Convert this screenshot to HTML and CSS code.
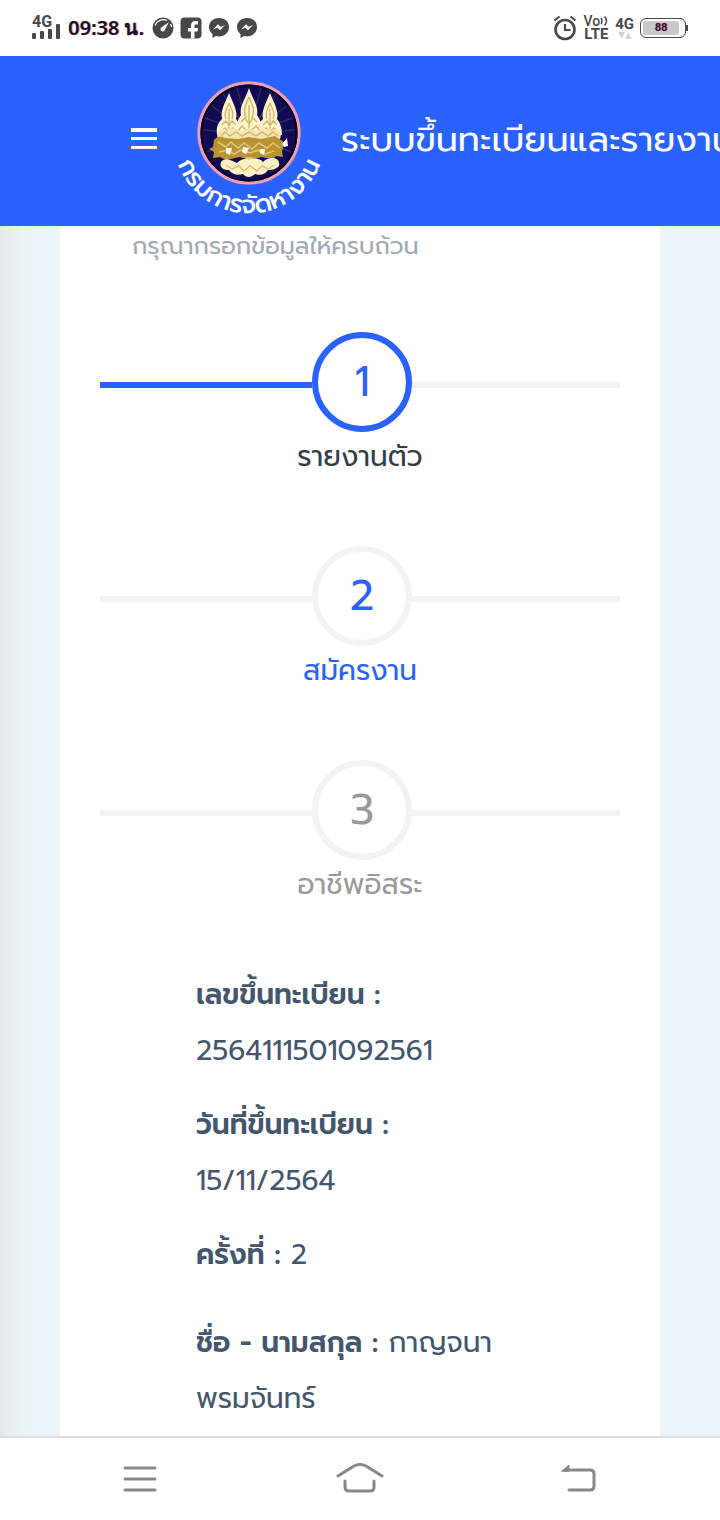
FILE: index.html
```html
<!DOCTYPE html>
<html lang="th">
<head>
    <meta charset="UTF-8">
    <meta name="viewport" content="width=device-width, initial-scale=1.0">
    <title>ระบบขึ้นทะเบียนและรายงานตัว</title>
    <link rel="stylesheet" href="styles.css">
</head>
<body>
<div class="status-bar">
    <div class="status-left">
        <div class="signal">
            <span class="signal-label">4G</span>
            <svg width="28" height="16" viewBox="0 0 28 16" fill="#484848">
                <rect x="0" y="9" width="4" height="6" rx="1"/>
                <rect x="8" y="7" width="4" height="8" rx="1"/>
                <rect x="16" y="5" width="4" height="10" rx="1"/>
                <rect x="24" y="0" width="4" height="15" rx="1"/>
            </svg>
        </div>
        <span class="clock">09:38 น.</span>
        <div class="notices">
            <svg width="22" height="22" viewBox="0 0 22 22">
                <circle cx="11" cy="11" r="10.5" fill="#484848"/>
                <path d="M3 8.500a9 9 0 0 1 12-5M18.500 7a9 9 0 0 1 1 3" fill="none" stroke="#fff" stroke-width="1.300"/>
                <path d="M17 5l-4 7.500a2.300 2.300 0 1 1-3-2.500z" fill="#fff"/>
            </svg>
            <svg width="22" height="22" viewBox="0 0 22 22">
                <rect x="0.500" y="0.500" width="21" height="21" rx="4" fill="#484848"/>
                <path d="M11 21.500v-7H8v-3.500h3V8.500C11 5.500 12.500 4 15.500 4H18v3.500h-2c-1 0-1.500.5-1.500 1.500v2H18l-.5 3.500h-3v7z" fill="#fff"/>
            </svg>
            <svg width="22" height="22" viewBox="0 0 22 22">
                <path d="M11 1C5 1 1 5 1 10c0 3 1.300 5.300 3.500 7v4l3.500-2c1 .3 2 .4 3 .4 6 0 10-4.200 10-9.400S17 1 11 1z" fill="#484848"/>
                <path d="M5 12.500l5-5.200 2.800 2.500L17 8l-5 5.200-2.700-2.500z" fill="#fff"/>
            </svg>
            <svg width="22" height="22" viewBox="0 0 22 22">
                <path d="M11 1C5 1 1 5 1 10c0 3 1.300 5.300 3.500 7v4l3.500-2c1 .3 2 .4 3 .4 6 0 10-4.200 10-9.400S17 1 11 1z" fill="#484848"/>
                <path d="M5 12.500l5-5.200 2.800 2.500L17 8l-5 5.200-2.700-2.500z" fill="#fff"/>
            </svg>
        </div>
    </div>
    <div class="status-right">
        <svg width="24" height="26" viewBox="0 0 24 26" fill="none" stroke="#484848">
            <circle cx="12" cy="14.500" r="9.500" stroke-width="2.600"/>
            <path d="M1.500 5.500l5-4M22.500 5.500l-5-4M12 9v6h5.500" stroke-width="2.200"/>
        </svg>
        <div class="volte">
            <span class="vo">Vo<svg width="9" height="12" viewBox="0 0 9 12" fill="none" stroke="#484848" stroke-width="1.500"><path d="M1 3q2 3 0 6M4.500 1.500q4 4.500 0 9"/></svg></span>
            <span class="lte">LTE</span>
        </div>
        <div class="data">
            <span class="data-label">4G</span>
            <svg width="14" height="8" viewBox="0 0 14 8" fill="#d4d4d4"><path d="M0 0h7L3.500 7zM7 7h7L10.500 0z"/></svg>
        </div>
        <div class="battery"><span class="battery-level">88</span></div>
    </div>
</div>

<header class="header">
    <button class="menu-button" aria-label="เมนู">
        <svg width="26" height="22" viewBox="0 0 26 22" fill="#fff"><path d="M0 0h26v4H0zM0 9h26v3H0zM0 18h26v3H0z"/></svg>
    </button>
    <a class="logo" href="#" aria-label="กรมการจัดหางาน">
        <svg width="160" height="150" viewBox="0 0 160 150">
            <defs>
                <path id="ring" d="M6 50A76 76 0 1 0 154 50"/>
                <g id="flame">
                    <path d="M0-24C4-14 9-6 7 2c3 4 5 8 5 16H-12c-1-8 1-12 5-16-2-8 3-16 7-26z" fill="#fff3cf"/>
                    <path d="M0-14c3 7 5 10 3 16M0-14c-3 7-5 10-3 16M0-8v20M-7 8l4-4 3 5 3-5 4 4M-8 14l4-3 4 4 4-4 4 3" fill="none" stroke="#d5b868" stroke-width="1.400"/>
                </g>
            </defs>
            <circle cx="80" cy="63" r="52" fill="#6a70b8"/>
            <circle cx="80" cy="63" r="50" fill="#120a52" stroke="#ef9dbb" stroke-width="3"/>
            <circle cx="80" cy="63" r="47.500" fill="none" stroke="#05031f" stroke-width="2"/>
            <path d="M80 63L36 48M80 63L34 60M80 63L43 36M80 63L54 24M80 63L68 18M80 63L92 18M80 63L107 24M80 63L118 36M80 63L124 48M80 63L126 60M80 63L38 82M80 63L122 82" stroke="#322763" stroke-width="1.500"/>
            <use href="#flame" x="60" y="47"/>
            <use href="#flame" x="101" y="47"/>
            <path d="M80 18c3 10 10 18 8 27 4 6 8 15 8 25H64c0-10 4-19 8-25-2-9 5-17 8-27z" fill="#fff3cf"/>
            <path d="M80 27c4 9 6 14 3 21M80 27c-4 9-6 14-3 21M80 35v28M72 52l4-4 4 6 4-6 4 4M68 62l5-6 7 7 7-7 5 6" fill="none" stroke="#d5b868" stroke-width="1.500"/>
            <path d="M49 69c-3-8 3-13 9-8l7-3 8 4 7-4 8 4 7-4 7 3c6-5 12 0 9 8z" fill="#f6e6b5"/>
            <path d="M52 66l4-4 5 4 6-4 6 4 7-4 7 4 6-4 6 4 5-4 5 4" fill="none" stroke="#d5b868" stroke-width="1.500"/>
            <path d="M45 70q5-6 11-2l13 1 11-2 12 2 14-3 9 6-2 10 1 5-7-1-3 3-12-2-11 3-10-3-14 3-6-3-7 1 1-6-5-3 4-2z" fill="#b89331"/>
            <path d="M49 72l8 5 5-5 7 6 6-5 8 6 7-6 8 5 6-5 7 5M50 82l9-2 6 4 7-4 9 3 8-3 7 4 9-3" fill="none" stroke="#e2c777" stroke-width="1.500"/>
            <path d="M57 78h6l-2 7-4-2zM74 77l6 1-3 6-4-2zM91 79h5l-1 6-4-2zM113 74l5-6 1 8-4 1z" fill="#fff"/>
            <path d="M77 87h6l3 8H74z" fill="#e2c777"/>
            <path d="M52 92c4-6 12-1 16 1 4-4 8-5 12-3 5-3 12-1 14 2 5-6 16-5 16 1 2 5-7 7-11 7-4 6-10 5-13 4-4 4-9 4-12 0-6 2-11 0-14-4-6 0-10-3-8-8z" fill="#fff0c5"/>
            <path d="M57 95l6 4 7-3 5 5 6-5 7 5 5-5 6 3 6-4" fill="none" stroke="#dcc176" stroke-width="1.500"/>
            <text class="ring-text"><textPath href="#ring" startOffset="50%" text-anchor="middle">กรมการจัดหางาน</textPath></text>
        </svg>
    </a>
    <h1 class="title">ระบบขึ้นทะเบียนและรายงานตัว</h1>
</header>

<main class="page">
    <section class="card">
        <p class="hint">กรุณากรอกข้อมูลให้ครบถ้วน</p>
        <nav class="steps">
            <a class="step active" href="#report">
                <span class="track"><span class="number">1</span></span>
                <span class="step-label">รายงานตัว</span>
            </a>
            <a class="step" href="#apply">
                <span class="track"><span class="number">2</span></span>
                <span class="step-label">สมัครงาน</span>
            </a>
            <a class="step disabled" href="#freelance">
                <span class="track"><span class="number">3</span></span>
                <span class="step-label">อาชีพอิสระ</span>
            </a>
        </nav>
        <div class="details">
            <p class="stacked"><strong>เลขขึ้นทะเบียน :</strong> <span>2564111501092561</span></p>
            <p class="stacked"><strong>วันที่ขึ้นทะเบียน :</strong> <span>15/11/2564</span></p>
            <p><strong>ครั้งที่ :</strong> 2</p>
            <p class="person"><strong>ชื่อ - นามสกุล :</strong> กาญจนา พรมจันทร์</p>
        </div>
    </section>
</main>

<footer class="system-nav">
    <button aria-label="แอปล่าสุด">
        <svg width="48" height="32" viewBox="0 0 48 32"><path d="M9 5h30M9 16h30M9 27h30"/></svg>
    </button>
    <button aria-label="หน้าหลัก">
        <svg width="48" height="32" viewBox="0 0 48 32"><path d="M2 13L18 3q6-3 12 0l16 10M9 18v6q0 4 4 4h21q4 0 4-4v-6"/></svg>
    </button>
    <button aria-label="ย้อนกลับ">
        <svg width="48" height="32" viewBox="0 0 48 32"><path d="M10 7h24q4 0 4 4v12q0 4-4 4H13"/><path class="arrow-head" d="M6 8l7-6v6z"/></svg>
    </button>
</footer>
</body>
</html>
```
FILE: styles.css
```css
* {
    box-sizing: border-box;
}
body {
    font-family: Prompt, "Noto Sans Thai", "Noto Sans", sans-serif;
    margin: 0;
    min-height: 100vh;
    display: flex;
    flex-direction: column;
    background-color: #fff;
    color: #44566c;
}
svg {
    display: block;
    flex-shrink: 0;
}
button {
    padding: 0;
    background: none;
    border: none;
    cursor: pointer;
}
a {
    text-decoration: none;
}

/* phone status bar */
.status-bar {
    height: 56px;
    padding: 0 34px 0 32px;
    display: flex;
    align-items: center;
    justify-content: space-between;
    color: #484848;
    font-family: Roboto, sans-serif;
    font-weight: bold;
}
.status-left {
    display: flex;
    align-items: center;
    gap: 8px;
}
.status-right {
    display: flex;
    align-items: center;
    gap: 6px;
}
.signal {
    position: relative;
    padding-top: 8px;
}
.signal-label {
    position: absolute;
    top: -2px;
    left: 0;
    font-size: 16px;
    line-height: 16px;
}
.clock {
    color: #171217;
    font-family: "Noto Sans", sans-serif;
    font-size: 20px;
    font-weight: 600;
    text-shadow: 1px 0 #e07aa8;
    white-space: nowrap;
}
.notices {
    display: flex;
    gap: 6px;
}
.volte, .data {
    display: flex;
    flex-direction: column;
    align-items: center;
    font-size: 15px;
    line-height: 14px;
}
.vo {
    display: flex;
    font-size: 14px;
    font-weight: 500;
    line-height: 12px;
}
.data {
    line-height: 16px;
}
.battery {
    position: relative;
    width: 46px;
    height: 20px;
    padding: 2px;
    border: 1px solid #484848;
    border-radius: 6px;
}
.battery::after {
    content: "";
    position: absolute;
    top: 6px;
    right: -3px;
    width: 2px;
    height: 6px;
    background-color: #484848;
}
.battery-level {
    display: block;
    width: 36px;
    background-color: #c9c9c9;
    border-radius: 3px;
    color: #2b1420;
    font-size: 11px;
    line-height: 14px;
    text-align: center;
    text-shadow: 1px 0 #e07aa8;
}

/* site header */
.header {
    height: 170px;
    padding: 0 0 4px 131px;
    display: flex;
    align-items: center;
    overflow: hidden;
    background-color: #2962ff;
    color: #fff;
}
.logo {
    margin: 12px 12px 0;
}
.ring-text {
    fill: #fff;
    font-size: 25px;
    font-weight: 500;
}
.title {
    margin: 0;
    font-size: 35px;
    font-weight: 400;
    white-space: nowrap;
}

/* page content */
.page {
    flex: 1;
    display: flex;
    padding: 0 60px;
    background: linear-gradient(to right, #e4e8ec, #eaf2f6 20px, #ebf4f8 40px);
}
.card {
    flex: 1;
    padding: 0 40px;
    background-color: #fff;
}
.hint {
    margin: 0;
    padding: 0 32px;
    color: #a1aab2;
    font-size: 24px;
    line-height: 40px;
}
.steps {
    display: flex;
    flex-direction: column;
    gap: 64px;
    padding: 66px 0 57px;
}
.step {
    color: #2962ff;
    text-align: center;
}
.track {
    display: flex;
    align-items: center;
}
.track::before, .track::after {
    content: "";
    flex: 1;
    height: 6px;
    margin-top: 6px;
    background-color: #f3f3f3;
}
.track::before {
    flex-basis: 4px;
}
.number {
    width: 100px;
    height: 100px;
    border: 6px solid #f3f3f3;
    border-radius: 50%;
    font-size: 42px;
    line-height: 88px;
}
.step-label {
    display: block;
    font-size: 28px;
    line-height: 50px;
}
.active .track::before {
    background-color: #2962ff;
}
.active .number {
    border-color: #2962ff;
}
.active .step-label {
    color: #323d49;
}
.disabled {
    color: #999;
}
.details {
    padding: 0 96px;
    font-size: 28px;
    line-height: 56px;
}
.details p {
    margin: 0 0 18px;
}
.details .person {
    margin: 32px 0 0;
}
.details strong {
    font-weight: 600;
}
.stacked strong {
    display: block;
}

/* phone navigation bar */
.system-nav {
    height: 84px;
    padding: 0 30px;
    display: flex;
    align-items: center;
    border-top: 2px solid #dedede;
}
.system-nav button {
    flex: 1;
    display: flex;
    justify-content: center;
}
.system-nav path {
    fill: none;
    stroke: #888;
    stroke-width: 3;
    stroke-linecap: round;
}
.system-nav .arrow-head {
    fill: #888;
    stroke-width: 1;
}
```
